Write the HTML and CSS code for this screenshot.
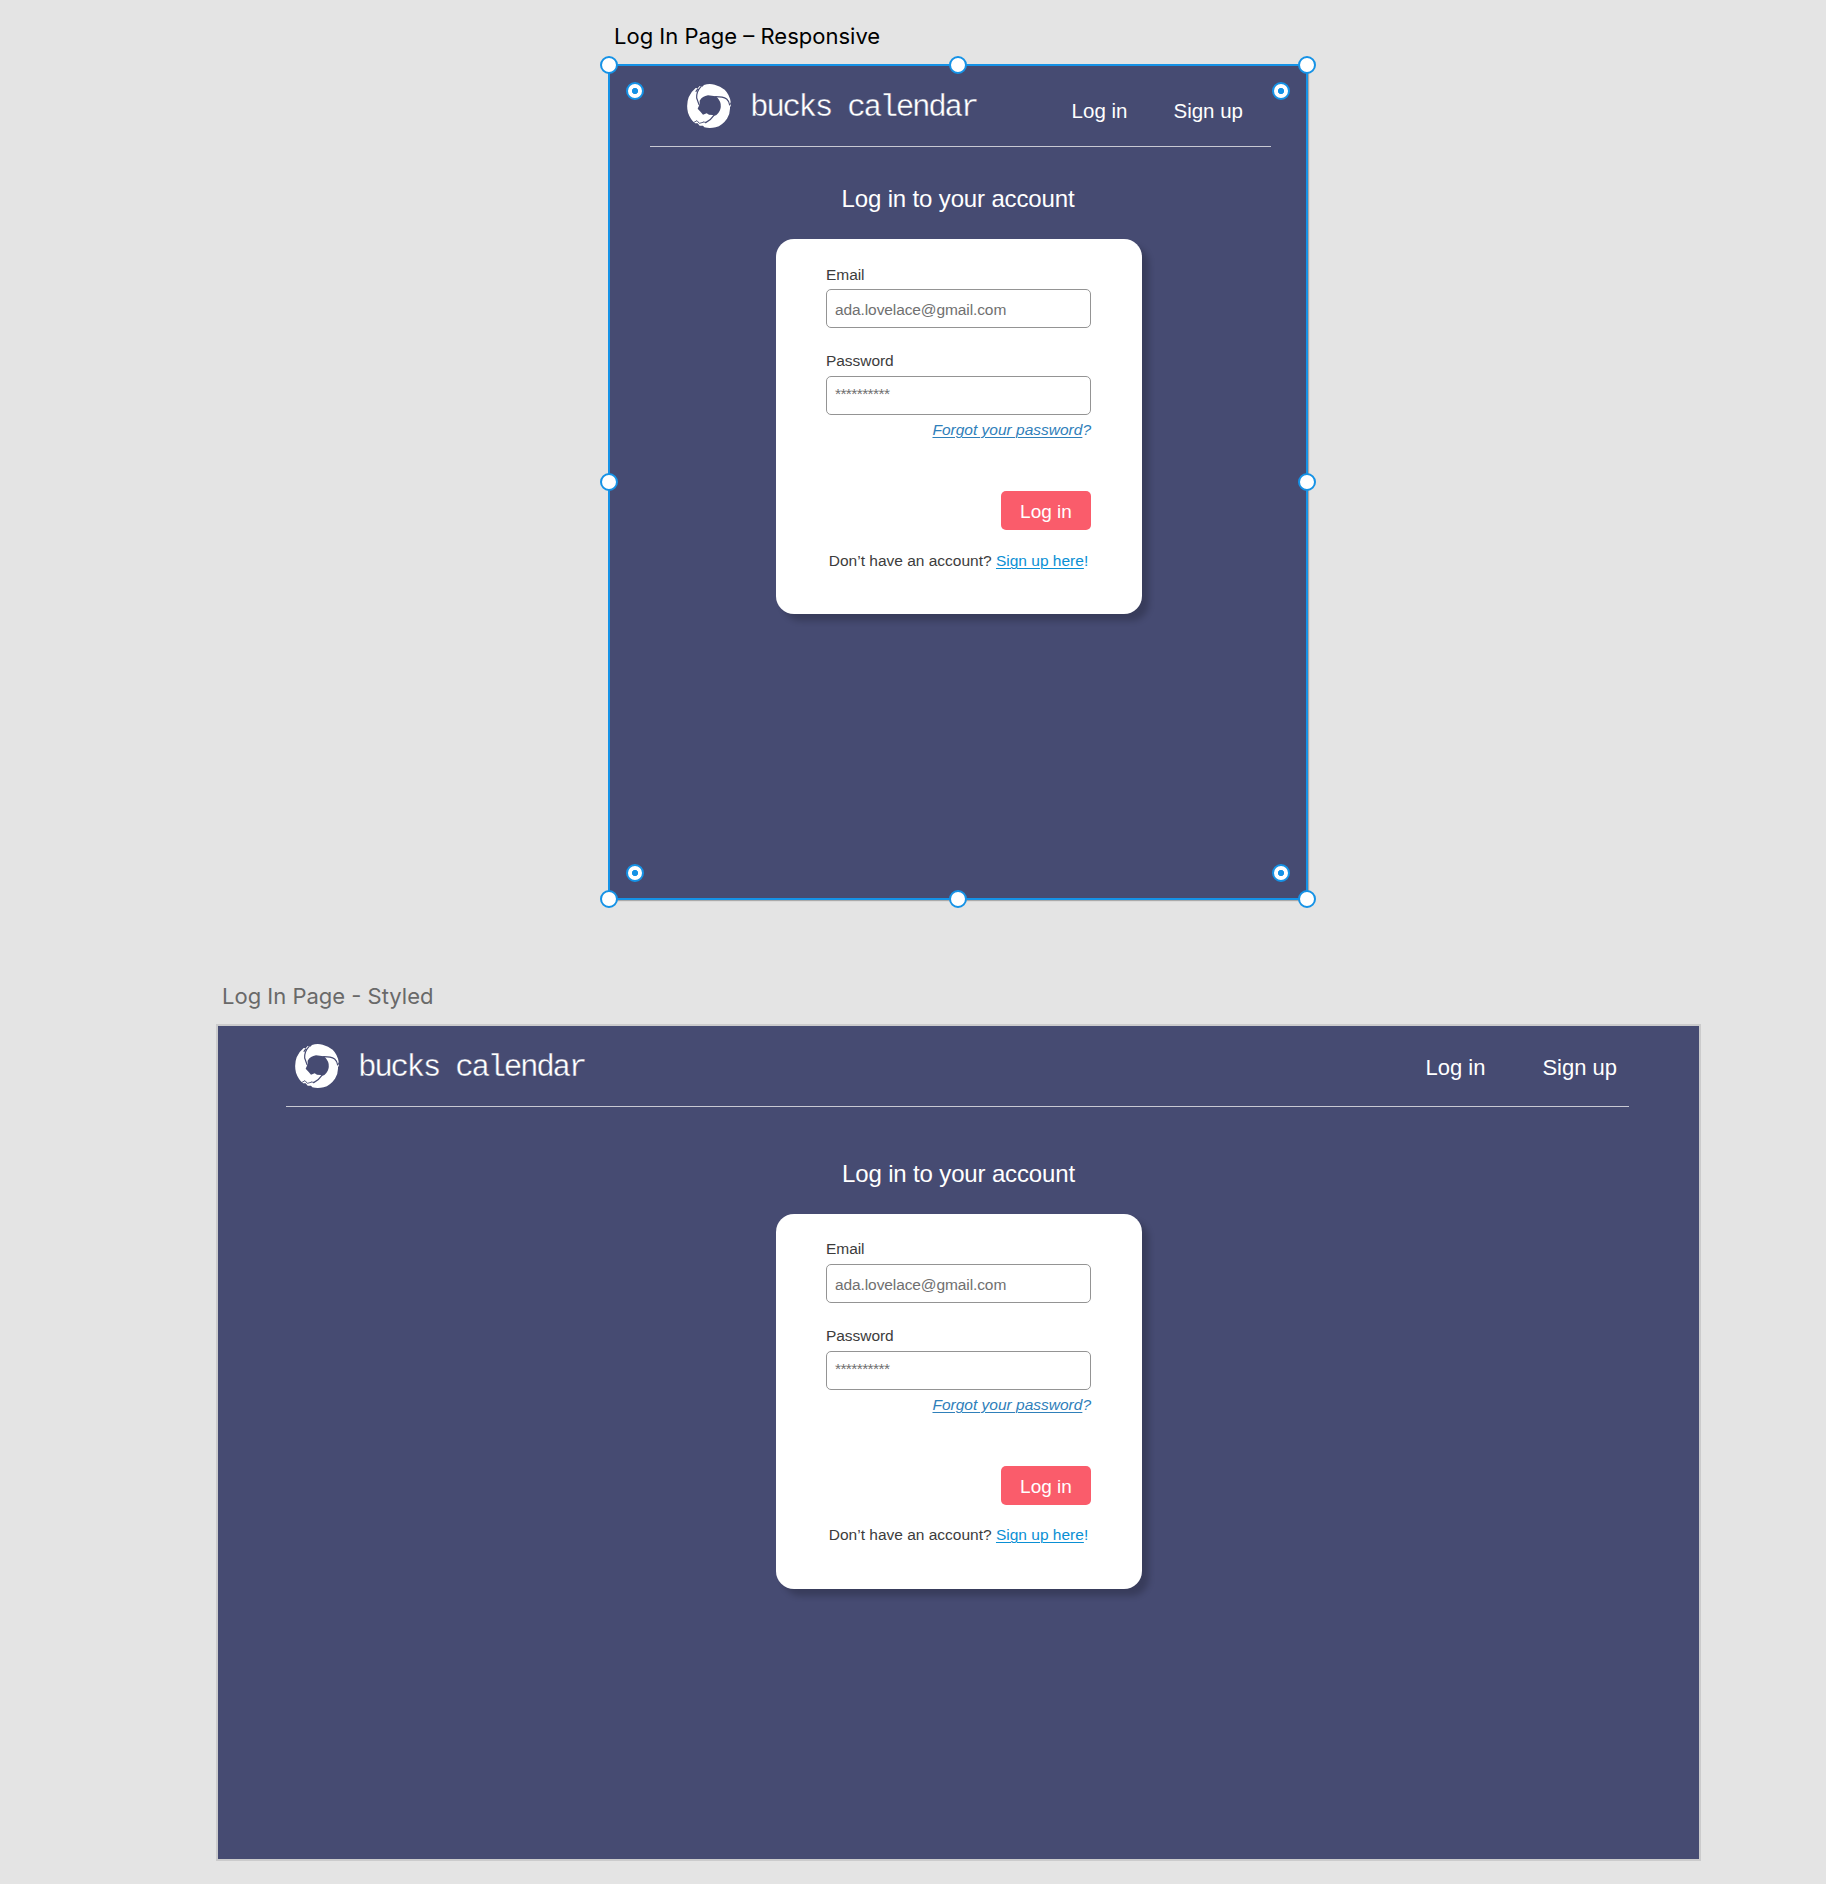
FILE: index.html
```html
<!DOCTYPE html>
<html lang="en">
<head>
<meta charset="utf-8">
<title>Log In Page</title>
<link rel="stylesheet" href="styles.css">
</head>
<body>
<svg width="0" height="0" class="defs" aria-hidden="true">
  <symbol id="logo" viewBox="50 42 132 132">
    <path class="ring" d="M101 45 Q116 40 133 44 Q150 48 163 59 Q178 74 181 96 L179 102 L182 106 L179 112 Q180 130 170 146 Q156 166 136 172 Q118 176 102 172 L98 167 L88 167 L82 160 L74 160 Q60 148 53 128 Q47 104 55 82 Q62 65 76 54 L82 55 L88 48 L96 50 Z"/>
    <path class="gap" d="M88 92 Q96 79 113 76 L136 79 Q148 88 151 102 Q153 118 144 129 Q139 136 131 138 L127 135 L116 134 L109 130 L98 134 Q90 124 82 116 Q86 108 88 101 Z"/>
    <path class="cut" d="M92 50 Q78 64 79 84 L86 104 M82 57 L77 64 M136 80 Q158 80 169 87 Q176 93 178 105"/>
    <path class="cut" d="M130 137 Q121 151 106 158"/>
    <path class="cut thin" d="M106 157 L99 156 M71 157 L80 152 L87 160 L98 157"/>
  </symbol>
</svg>
<main class="canvas">
  <section class="artboard artboard-responsive">
    <h2 class="artboard-name">Log In Page – Responsive</h2>
    <div class="screen">
      <header class="bar">
        <svg class="logo"><use href="#logo"/></svg>
        <span class="brand">bucks calendar</span>
        <nav class="nav"><a>Log in</a><a>Sign up</a></nav>
      </header>
      <h1 class="title">Log in to your account</h1>
      <form class="card">
        <label class="label">Email</label>
        <div class="field">ada.lovelace@gmail.com</div>
        <label class="label">Password</label>
        <div class="field secret">**********</div>
        <p class="forgot"><u>Forgot your password</u>?</p>
        <div class="button">Log in</div>
        <p class="join">Don’t have an account? <span class="link"><u>Sign up here</u>!</span></p>
      </form>
    </div>
    <i class="handle tl"></i><i class="handle tc"></i><i class="handle tr"></i>
    <i class="handle ml"></i><i class="handle mr"></i>
    <i class="handle bl"></i><i class="handle bc"></i><i class="handle br"></i>
    <i class="handle dot dtl"></i><i class="handle dot dtr"></i><i class="handle dot dbl"></i><i class="handle dot dbr"></i>
  </section>
  <section class="artboard artboard-styled">
    <h2 class="artboard-name">Log In Page - Styled</h2>
    <div class="screen">
      <header class="bar">
        <svg class="logo"><use href="#logo"/></svg>
        <span class="brand">bucks calendar</span>
        <nav class="nav"><a>Log in</a><a>Sign up</a></nav>
      </header>
      <h1 class="title">Log in to your account</h1>
      <form class="card">
        <label class="label">Email</label>
        <div class="field">ada.lovelace@gmail.com</div>
        <label class="label">Password</label>
        <div class="field secret">**********</div>
        <p class="forgot"><u>Forgot your password</u>?</p>
        <div class="button">Log in</div>
        <p class="join">Don’t have an account? <span class="link"><u>Sign up here</u>!</span></p>
      </form>
    </div>
  </section>
</main>
</body>
</html>
```
FILE: styles.css
```css
* { box-sizing: border-box; }
body { margin: 0; background: #e4e4e4; font-family: "Liberation Sans", Arial, sans-serif; }
h1, h2, p { margin: 0; font-weight: 400; }
.defs { position: absolute; }
.canvas { position: relative; width: 1826px; height: 1884px; overflow: hidden; }

.artboard { position: absolute; }
.artboard-responsive { left: 608px; top: 20px; width: 700px; }
.artboard-styled { left: 216px; top: 980px; width: 1485px; }
.artboard-name {
  height: 44px; padding-left: 6px;
  font: 400 22px/32px Inter, "Open Sans", sans-serif;
  letter-spacing: 0; white-space: nowrap; color: #000;
}
.artboard-styled .artboard-name { color: #696969; }

.screen { background: #464b72; border: 2px solid #1592e6; height: 836px; box-shadow: 1px 1px 1px #aaa; }
.artboard-styled .screen { border-color: #cbcbcc; box-shadow: none; height: 837px; }

.bar {
  display: flex; height: 81px; margin: 0 35px 0 39.5px; padding: 18px 28px 0 37.5px;
  border-bottom: 1px solid #c8c9d3; color: #fff;
}
.artboard-styled .bar { margin: 0 70px 0 68px; padding: 18px 12px 0 9px; }
.logo { width: 44px; height: 44px; flex: none; }
.ring { fill: #fff; }
.gap { fill: #464b72; }
.cut { fill: none; stroke: #464b72; stroke-width: 3.6; stroke-linecap: round; stroke-linejoin: round; }
.thin { stroke-width: 2.6; }
.brand {
  margin-left: 19px; font: 31px/48px "Liberation Mono", monospace; letter-spacing: -2.4px;
  white-space: pre; -webkit-text-stroke: 0.35px #464b72;
}
.nav { display: flex; margin-left: auto; gap: 46px; font-size: 20.5px; line-height: 30px; padding-top: 12px; white-space: nowrap; }
.artboard-styled .nav { font-size: 22px; gap: 57px; padding-top: 9px; }

.title { color: #fff; text-align: center; font-size: 24px; line-height: 30px; letter-spacing: -0.15px; margin-top: 37px; }
.artboard-styled .title { margin-top: 52px; }

.card {
  width: 366.5px; height: 375px; margin: 25px 0 0 165.5px; padding: 25px 51px 0 50.5px;
  background: #fff; border-radius: 18px; box-shadow: 7px 7px 6px rgba(0, 0, 0, 0.2);
  font-size: 15.5px; line-height: 20px; color: #3c3c3c;
}
.artboard-styled .card { margin-left: 557.5px; }
.label { display: block; height: 25px; letter-spacing: -0.05px; }
.artboard-responsive .label:first-child { line-height: 22px; }
.field {
  height: 39px; border: 1px solid #949494; border-radius: 5px; margin-bottom: 23px;
  padding: 10px 8px 0; color: #707070; letter-spacing: -0.1px;
}
.secret { margin-bottom: 5px; padding-top: 7px; letter-spacing: -0.6px; }
.forgot { text-align: right; font-style: italic; color: #2f80ba; }
u { text-decoration-thickness: 1px; text-underline-offset: 2px; text-decoration-skip-ink: auto; }
.button {
  width: 90px; height: 39px; margin: 51px 0 0 auto; border-radius: 5px;
  background: #fa5c6b; color: #fff; font-size: 19px; line-height: 41px; text-align: center;
}
.join { margin-top: 21px; text-align: center; white-space: nowrap; }
.artboard-styled .join { margin-top: 20px; }
.link { color: #0a8fd4; }

.handle {
  position: absolute; width: 18px; height: 18px; border-radius: 50%;
  background: #fff; border: 2px solid #1592e6; transform: translate(-50%, -50%);
}
.dot { background: radial-gradient(circle, #1592e6 0 2.8px, #fff 3.4px); }
.tl { left: 1px; top: 45px; } .tc { left: 350px; top: 45px; } .tr { left: 699px; top: 45px; }
.ml { left: 1px; top: 462px; } .mr { left: 699px; top: 462px; }
.bl { left: 1px; top: 879px; } .bc { left: 350px; top: 879px; } .br { left: 699px; top: 879px; }
.dtl { left: 27px; top: 71px; } .dtr { left: 673px; top: 71px; }
.dbl { left: 27px; top: 853px; } .dbr { left: 673px; top: 853px; }
```
